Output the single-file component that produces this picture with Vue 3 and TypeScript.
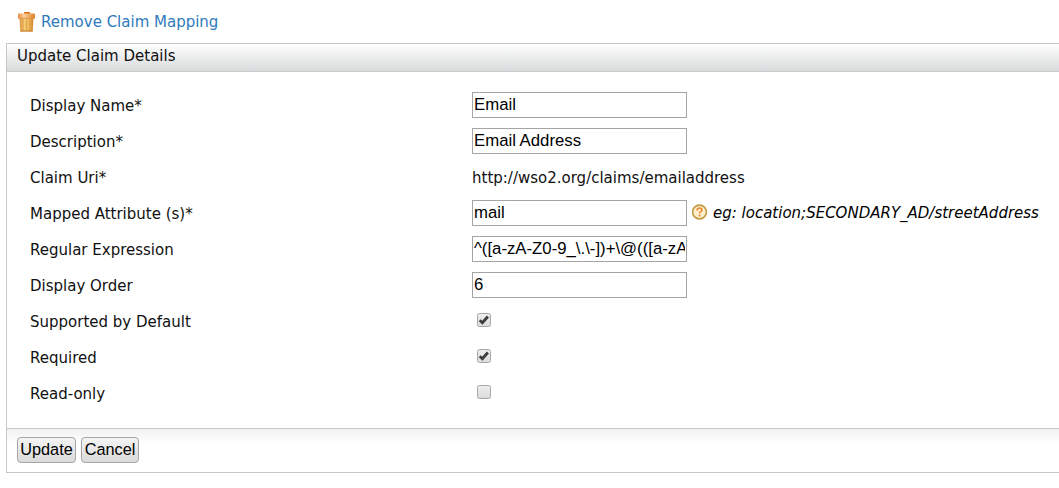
<script setup lang="ts">
import { reactive } from 'vue'

interface Field {
  label: string
  kind: 'text' | 'static' | 'check'
  value?: string
  checked?: boolean
  hint?: string
}

const fields = reactive<Field[]>([
  { label: 'Display Name*', kind: 'text', value: 'Email' },
  { label: 'Description*', kind: 'text', value: 'Email Address' },
  { label: 'Claim Uri*', kind: 'static', value: 'http://wso2.org/claims/emailaddress' },
  { label: 'Mapped Attribute (s)*', kind: 'text', value: 'mail', hint: 'eg: location;SECONDARY_AD/streetAddress' },
  { label: 'Regular Expression', kind: 'text', value: '^([a-zA-Z0-9_\\.\\-])+\\@(([a-zA-Z0-9\\-])+\\.)+([a-zA-Z0-9]{2,4})+$' },
  { label: 'Display Order', kind: 'text', value: '6' },
  { label: 'Supported by Default', kind: 'check', checked: true },
  { label: 'Required', kind: 'check', checked: true },
  { label: 'Read-only', kind: 'check', checked: false },
])
</script>

<template>
  <main class="page">
    <a class="remove">
      <svg class="trash" width="18" height="21" viewBox="0 0 18 21">
        <defs>
          <linearGradient id="bin" x1="0" x2="1" y1="0" y2="0">
            <stop offset="0" stop-color="#dc9240" />
            <stop offset=".35" stop-color="#f5cc74" />
            <stop offset=".7" stop-color="#edb758" />
            <stop offset="1" stop-color="#d38432" />
          </linearGradient>
          <linearGradient id="lid" x1="0" x2="1" y1="0" y2="0">
            <stop offset="0" stop-color="#e58e3b" />
            <stop offset=".35" stop-color="#fbd29a" />
            <stop offset="1" stop-color="#df8127" />
          </linearGradient>
        </defs>
        <path d="M6 1h6v2H6z" fill="#d4731f" />
        <path d="M1.500 6h14l-.7 14.500H2.200z" fill="url(#bin)" />
        <path d="M5 8.500v10.500M8.500 8.500v10.500M12 8.500v10.500" stroke="#d59340" stroke-width="1" opacity=".65" />
        <path d="M2.500 20h12" stroke="#bd7427" />
        <rect x="0" y="2.500" width="17" height="5" rx=".8" fill="url(#lid)" />
        <path d="M.5 7.300h16" stroke="#dc8638" stroke-width=".8" />
      </svg>
      <span class="remove-text">Remove Claim Mapping</span>
    </a>

    <section class="panel">
      <h2 class="heading">Update Claim Details</h2>
      <div class="fields">
        <div v-for="field in fields" :key="field.label" class="row">
          <label class="label">{{ field.label }}</label>
          <input v-if="field.kind === 'text'" v-model="field.value" class="input" type="text" />
          <span v-else-if="field.kind === 'static'" class="static">{{ field.value }}</span>
          <label v-else class="check">
            <input v-model="field.checked" class="native" type="checkbox" />
            <svg v-if="field.checked" class="tick" width="14" height="14" viewBox="0 0 14 14">
              <path d="M2.700 7.300L5.400 9.700L10.900 3.500" fill="none" stroke="#3c3c3c" stroke-width="2.800" />
            </svg>
          </label>
          <template v-if="field.hint">
            <svg class="help" width="16" height="16" viewBox="0 0 16 16">
              <circle cx="7.500" cy="8" r="6.900" fill="#fff0cc" stroke="#c09a45" stroke-width="1.600" />
              <path d="M5.100 6.400C5.100 3.200 10 3.300 9.900 6.100C9.800 7.700 7.500 7.600 7.500 9.500" fill="none" stroke="#e9893b" stroke-width="1.700" />
              <path d="M7.500 10.600v1.800" stroke="#e9893b" stroke-width="1.800" />
            </svg>
            <em class="hint">{{ field.hint }}</em>
          </template>
        </div>
      </div>
      <div class="actions">
        <button class="button update" type="button">Update</button>
        <button class="button cancel" type="button">Cancel</button>
      </div>
    </section>
  </main>
</template>

<style>
body {
  background: #fff;
}
</style>

<style scoped>
.page {
  box-sizing: border-box;
  height: 488px;
  padding: 11px 0 0 6px;
  overflow: hidden;
  font-family: "DejaVu Sans", sans-serif;
  font-size: 15px;
  color: #111;
}
.remove {
  display: flex;
  height: 32px;
  padding-left: 12px;
  box-sizing: border-box;
  line-height: 21px;
  color: #2f7abd;
}
.trash {
  margin-right: 5px;
}
.remove-text {
  padding-top: 1px;
}
.panel {
  box-sizing: border-box;
  height: 430px;
  border: 1px solid #c8c8c8;
  border-right: 0;
}
.heading {
  box-sizing: border-box;
  height: 28px;
  margin: 0;
  padding-left: 10px;
  border-bottom: 1px solid #c8caca;
  background: linear-gradient(#fff, #d8dadb);
  font-size: 15px;
  font-weight: 400;
  line-height: 24px;
}
.fields {
  box-sizing: border-box;
  height: 356px;
  padding: 15px 0 0 23px;
}
.row {
  display: flex;
  align-items: center;
  height: 36px;
  white-space: nowrap;
}
.label {
  width: 442px;
  flex: none;
  padding-top: 2px;
}
.static {
  padding-top: 2px;
}
.input {
  box-sizing: border-box;
  width: 215px;
  height: 26px;
  margin: 0;
  padding: 0 1px;
  border: 1px solid #a5a5a5;
  border-radius: 0;
  outline: 0;
  background: #fff;
  color: #000;
  font: 16.75px "Liberation Sans", sans-serif;
}
.check {
  display: flex;
  box-sizing: border-box;
  width: 14px;
  height: 14px;
  margin: 0 0 3px 5px;
  border: 1px solid #a6a6a6;
  border-radius: 2.500px;
  background: linear-gradient(#ededed, #dcdcdc);
}
.native {
  display: none;
}
.tick {
  flex: none;
  margin: -1px;
}
.help {
  margin: 0 5px 3px;
}
.hint {
  color: #000;
}
.actions {
  display: flex;
  box-sizing: border-box;
  height: 44px;
  gap: 5px;
  padding: 8px 0 0 10px;
  border-top: 1px solid #c8c8c8;
  background: linear-gradient(#f0f0f0, #fff 14px);
}
.button {
  box-sizing: border-box;
  height: 26px;
  margin: 0;
  padding: 0 0 2px;
  border: 1px solid #a6a6a6;
  border-radius: 4px;
  background: linear-gradient(#f4f4f4, #dadada);
  color: #000;
  font: 16.3px "Liberation Sans", sans-serif;
}
.update {
  width: 59px;
}
.cancel {
  width: 58px;
}
</style>
